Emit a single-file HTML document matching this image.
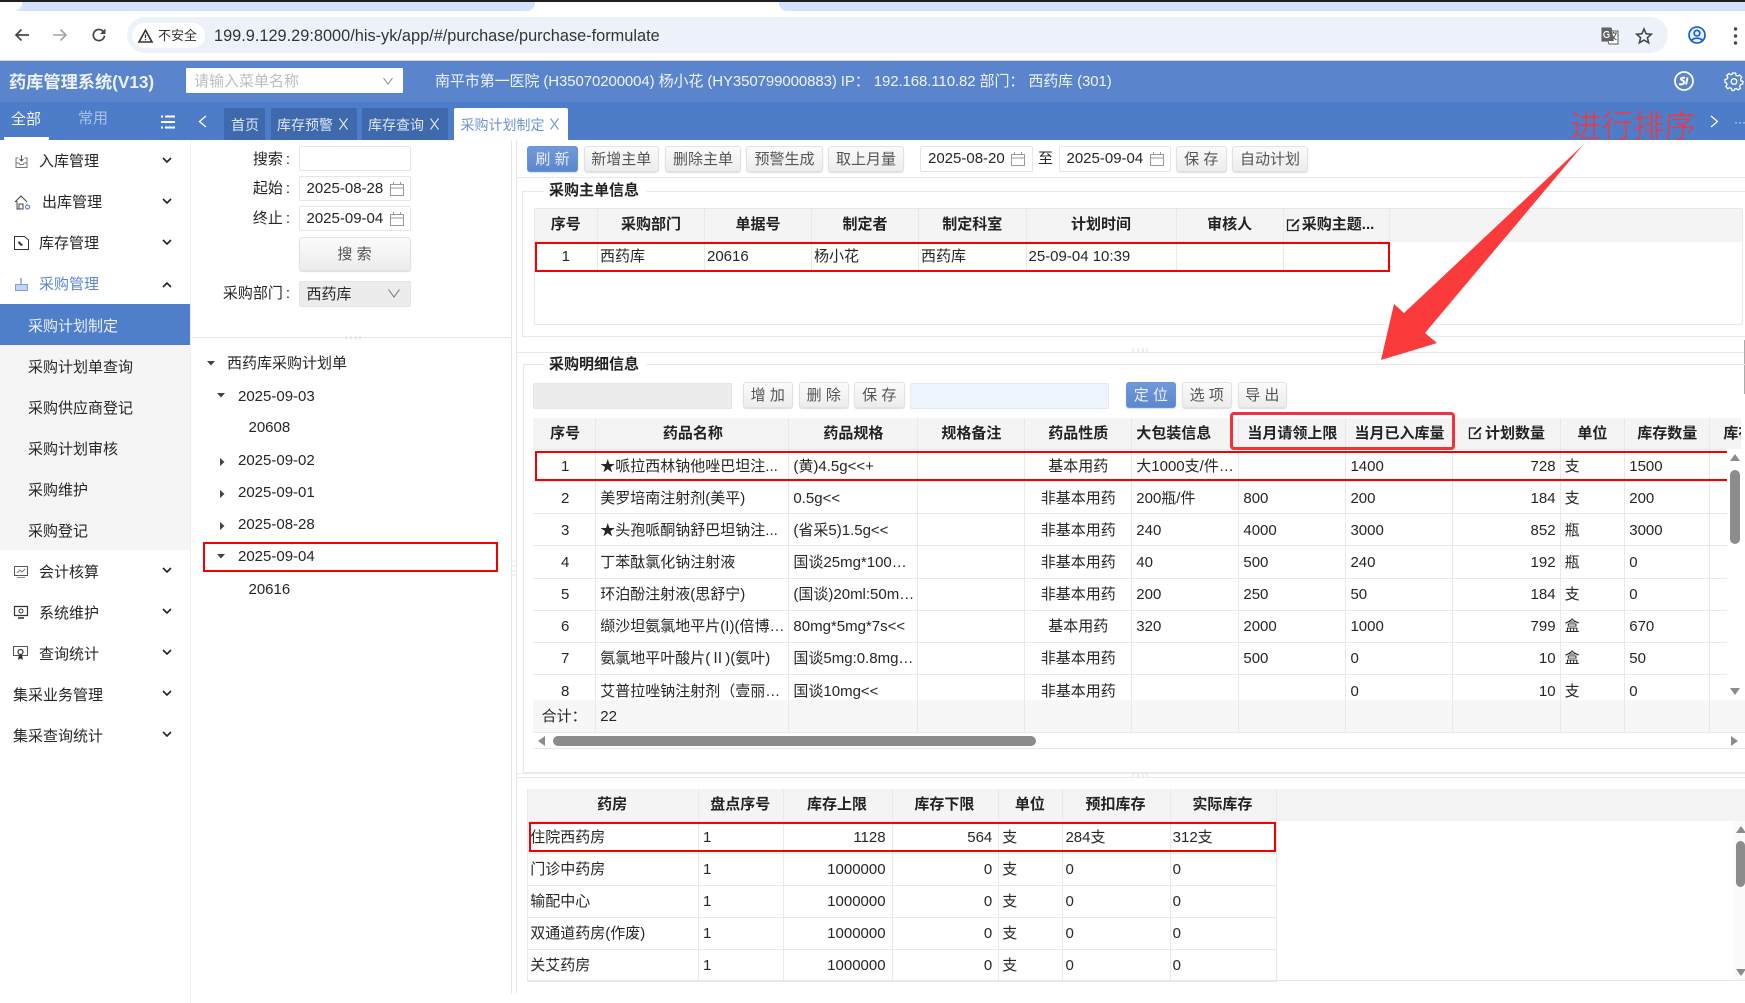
<!DOCTYPE html>
<html lang="zh-CN">
<head>
<meta charset="utf-8">
<title>药库管理系统</title>
<style>
*{box-sizing:border-box}
html,body{margin:0;padding:0;width:1745px;height:1003px;overflow:hidden;background:#fff}
body{position:relative;font:15px/20px "Liberation Sans","Noto Sans CJK SC",sans-serif;color:#262626;filter:blur(.25px)}
.a{position:absolute;white-space:nowrap}
.t{position:absolute;white-space:nowrap;line-height:20px;height:20px}
svg{position:absolute;overflow:visible}
.tab{position:absolute;top:108px;height:32px;background:#3e69ad;color:#dfe7f5;font-size:14px;line-height:34px;border-radius:2px 2px 0 0;white-space:nowrap}
.btn{position:absolute;height:26px;border:1px solid #e2e2e2;border-radius:3px;background:linear-gradient(#fbfbfb,#ececec);box-shadow:0 1px 1px #ddd;color:#555;text-align:center;line-height:26px;white-space:nowrap}
.blue{background:linear-gradient(#7099da,#5c87ce);border-color:#6a93d6;color:#e9eff9}
.inp{position:absolute;height:26px;border:1px solid #e6e6e6;border-radius:2px;background:#fff;line-height:24px;padding-left:7px;white-space:nowrap}
table{border-collapse:collapse;table-layout:fixed;position:absolute;left:0;top:0}
td,th{border:1px solid #e9e9e9;padding:0 4px;overflow:hidden;white-space:nowrap;font-size:15px;font-weight:normal;line-height:20px}
td{padding-top:2px}
th{background:#f4f4f4;font-weight:bold;text-align:center;color:#222;padding:0 2px}
.t1 td{padding:0 2px}
.t3 th{padding:0 3px 0 1px}
.r{text-align:right}.c{text-align:center}
td.p2{padding-left:2px}
td.n{padding-left:6px}
.colon{padding-left:3px}
.red{position:absolute;border:2px solid #f40000}
.sub{background:#f5f5f5}
.line{position:absolute;background:#e9e9e9}
</style>
</head>
<body>
<!-- browser chrome -->
<div class="a" style="left:0;top:2px;width:1745px;height:9px;background:#d3e3fd"></div>
<div class="a" style="left:0;top:2px;width:22px;height:9px;background:#fff;border-radius:0 0 8px 0"></div>
<div class="a" style="left:527px;top:2px;width:260px;height:10px;background:#fff"></div>
<div class="a" style="left:515px;top:2px;width:20px;height:9px;background:#d3e3fd;border-radius:0 0 8px 0"></div>
<div class="a" style="left:779px;top:2px;width:20px;height:9px;background:#d3e3fd;border-radius:0 0 0 8px"></div>
<div class="a" style="left:0;top:0;width:1745px;height:2px;background:#1f1f1f"></div>
<div class="a" style="left:0;top:11px;width:1745px;height:49px;background:#fff"></div>
<div class="a" style="left:127px;top:17px;width:1541px;height:36px;background:#edf2fa;border-radius:18px"></div>
<div class="a" style="left:132px;top:23px;width:73px;height:25px;background:#fff;border-radius:13px"></div>
<svg style="left:14px;top:27px" width="16" height="16" viewBox="0 0 16 16"><path d="M15 8H2M7.5 2.5L2 8l5.5 5.5" fill="none" stroke="#474747" stroke-width="1.7"/></svg>
<svg style="left:52px;top:27px" width="16" height="16" viewBox="0 0 16 16"><path d="M1 8h13M8.500 2.500L14 8l-5.500 5.500" fill="none" stroke="#a3a3a3" stroke-width="1.600"/></svg>
<svg style="left:91px;top:27px" width="16" height="16" viewBox="0 0 16 16"><path d="M13.500 8.500A5.600 5.600 0 1 1 11.800 4L14 6" fill="none" stroke="#474747" stroke-width="1.700"/><path d="M14.500 1.500v5.500H9z" fill="#474747"/></svg>
<svg style="left:138px;top:28.500px" width="15" height="14" viewBox="0 0 15 14"><path d="M7.500 1.200L14 13H1z" fill="none" stroke="#333" stroke-width="1.600"/><path d="M7.500 5.500v3.500M7.500 10v1.300" stroke="#333" stroke-width="1.300"/></svg>
<div class="t" style="left:158px;top:26px;font-size:13px;color:#333">不安全</div>
<div class="t" style="left:214px;top:26px;font-size:16.330px;color:#333;width:447px">199.9.129.29:8000/his-yk/app/#/purchase/purchase-formulate</div>
<svg style="left:1601px;top:27px" width="18" height="18" viewBox="0 0 18 18"><path d="M1 1h9l1 3h6v13H8l-1-3H1z" fill="#fff" stroke="#555" stroke-width="1"/><path d="M1 1h9l3 13H1z" fill="#5f6368"/><path d="M9 6h7M12.500 5v1M15 6c-1 4-3 6-5 8M11 8c1 2 3 4 4.500 5" fill="none" stroke="#555" stroke-width="1"/><path d="M8 5.500A3 3 0 1 0 8 9.500V7.500H6" fill="none" stroke="#fff" stroke-width="1.200"/></svg>
<svg style="left:1635px;top:27px" width="18" height="18" viewBox="0 0 18 18"><path d="M9 2l2.100 4.800 5.200.5-3.900 3.400 1.200 5.100L9 13.100l-4.600 2.700 1.200-5.100-3.900-3.400 5.200-.5z" fill="none" stroke="#474747" stroke-width="1.600"/></svg>
<svg style="left:1688px;top:26px" width="18" height="18" viewBox="0 0 18 18"><circle cx="9" cy="9" r="8" fill="#e8f0fe" stroke="#0b57d0" stroke-width="1.600"/><circle cx="9" cy="7.200" r="2.800" fill="none" stroke="#0b57d0" stroke-width="1.600"/><path d="M3.500 14.500c2-3 9-3 11 0" fill="none" stroke="#0b57d0" stroke-width="1.600"/></svg>
<svg style="left:1733px;top:27px" width="5" height="18" viewBox="0 0 5 18"><circle cx="2.500" cy="2" r="1.700" fill="#474747"/><circle cx="2.500" cy="9" r="1.700" fill="#474747"/><circle cx="2.500" cy="16" r="1.700" fill="#474747"/></svg>

<!-- header -->
<div class="a" style="left:0;top:60px;width:1745px;height:1px;background:#d5d5d5"></div>
<div class="a" style="left:0;top:61px;width:1745px;height:41px;background:#5a85cd"></div>
<div class="a" style="left:0;top:102px;width:1745px;height:38px;background:#4d7dc9"></div>
<div class="t" style="left:9px;top:71.500px;font-size:17.200px;font-weight:bold;color:#eef3fb">药库管理系统(V13)</div>
<div class="a" style="left:186px;top:68px;width:217px;height:25px;background:#fff;border-radius:1px"></div>
<div class="t" style="left:194px;top:72px;color:#bdbdbd">请输入菜单名称</div>
<svg style="left:383px;top:77px" width="10" height="8" viewBox="0 0 10 8"><path d="M.5 1L5 7l4.500-6" fill="none" stroke="#888" stroke-width="1"/></svg>
<div class="t" style="left:435px;top:71.500px;color:#eef3fb;font-size:15px;letter-spacing:-.1px;width:676px">南平市第一医院 (H35070200004) 杨小花 (HY350799000883) IP： 192.168.110.82 部门： 西药库 (301)</div>
<svg style="left:1674px;top:71px" width="20" height="20" viewBox="0 0 20 20"><circle cx="10" cy="10" r="9" fill="none" stroke="#fff" stroke-width="1.800"/><path d="M5 13c3 1 5 0 5-2S6 9 7 7.500c1-1 3-1 4-.5M13.500 6.500l-1.500 7" fill="none" stroke="#fff" stroke-width="2"/></svg>
<svg style="left:1725px;top:72px" width="18" height="18" viewBox="0 0 18 18"><path d="M7.500 1h3l.5 2.200 1.700.8 2-1 2 2.200-1.200 1.900.5 1.700L18 9.500l-.3 2.600-2.200.5-.9 1.600.9 2-2.300 1.700-1.700-1.300-1.800.3L9 18.500H7l-.6-2.100-1.800-.7-1.900 1L.8 14.500l1.200-1.800-.6-1.700L0 10.300V7.500l2-.6.800-1.600-1-2L4 1.600l1.800 1.200L7.300 2.300z" fill="none" stroke="#fff" stroke-width="1.300"/><circle cx="9" cy="9.500" r="2.800" fill="none" stroke="#fff" stroke-width="1.300"/></svg>

<!-- tabs row -->
<div class="t" style="left:11px;top:110px;color:#f3f6fc">全部</div>
<div class="a" style="left:4px;top:137px;width:45px;height:3px;background:#fff"></div>
<div class="t" style="left:78px;top:109px;color:#a9c0e6">常用</div>
<svg style="left:161px;top:115px" width="14" height="14" viewBox="0 0 14 14"><path d="M4 1.500h10M0 7h14M4 12.500h10" stroke="#fff" stroke-width="2"/><path d="M0 1.500h2M0 12.500h2" stroke="#fff" stroke-width="2"/></svg>
<svg style="left:198px;top:115px" width="9" height="13" viewBox="0 0 9 13"><path d="M8 1L1.500 6.500 8 12" fill="none" stroke="#fff" stroke-width="1.300"/></svg>
<div class="tab" style="left:224px;width:41px;padding-left:7px">首页</div>
<div class="tab" style="left:271px;width:86px;padding-left:6px">库存预警</div>
<svg style="left:339px;top:118px" width="9" height="12" viewBox="0 0 9 12"><path d="M.5.500l8 11M8.500.500l-8 11" stroke="#e6ecf7" stroke-width="1.100"/></svg>
<div class="tab" style="left:362px;width:86px;padding-left:6px">库存查询</div>
<svg style="left:430px;top:118px" width="9" height="12" viewBox="0 0 9 12"><path d="M.5.500l8 11M8.500.500l-8 11" stroke="#e6ecf7" stroke-width="1.100"/></svg>
<div class="tab" style="left:453.500px;width:114.500px;padding-left:7px;background:#fff;color:#6b93d3">采购计划制定</div>
<svg style="left:550px;top:118px" width="9" height="12" viewBox="0 0 9 12"><path d="M.5.500l8 11M8.500.500l-8 11" stroke="#6b93d3" stroke-width="1.100"/></svg>
<div class="t" style="left:1570px;top:107px;font-size:31.500px;line-height:38px;height:38px;color:#f8353a;font-weight:300">进行排序</div>
<svg style="left:1710px;top:115px" width="9" height="13" viewBox="0 0 9 13"><path d="M1 1l6.500 5.500L1 12" fill="none" stroke="#fff" stroke-width="1.200"/></svg>
<div class="t" style="left:1734px;top:112px;color:#dfe7f5;font-size:12px">···</div>

<!-- sidebar -->
<div class="a" style="left:190px;top:140px;width:1px;height:863px;background:#f0f0f0"></div>
<div class="t" style="left:39px;top:152px">入库管理</div>
<div class="t" style="left:42px;top:193px">出库管理</div>
<div class="t" style="left:39px;top:234px">库存管理</div>
<div class="t" style="left:39px;top:275px;color:#5b87cf">采购管理</div>
<div class="a" style="left:0;top:304px;width:190px;height:41px;background:#4f7fcb"></div>
<div class="t" style="left:28px;top:317px;color:#eaf0fa">采购计划制定</div>
<div class="a sub" style="left:0;top:345px;width:190px;height:205px"></div>
<div class="t" style="left:28px;top:358px">采购计划单查询</div>
<div class="t" style="left:28px;top:399px">采购供应商登记</div>
<div class="t" style="left:28px;top:440px">采购计划审核</div>
<div class="t" style="left:28px;top:481px">采购维护</div>
<div class="t" style="left:28px;top:521.500px">采购登记</div>
<div class="t" style="left:39px;top:563px">会计核算</div>
<div class="t" style="left:39px;top:604px">系统维护</div>
<div class="t" style="left:39px;top:645px">查询统计</div>
<div class="t" style="left:13px;top:686px">集采业务管理</div>
<div class="t" style="left:13px;top:727px">集采查询统计</div>
<svg style="left:162px;top:157px" width="10" height="7" viewBox="0 0 10 7"><path d="M1 1l4 4 4-4" fill="none" stroke="#222" stroke-width="1.600"/></svg>
<svg style="left:162px;top:198px" width="10" height="7" viewBox="0 0 10 7"><path d="M1 1l4 4 4-4" fill="none" stroke="#222" stroke-width="1.600"/></svg>
<svg style="left:162px;top:239px" width="10" height="7" viewBox="0 0 10 7"><path d="M1 1l4 4 4-4" fill="none" stroke="#222" stroke-width="1.600"/></svg>
<svg style="left:162px;top:281px" width="10" height="7" viewBox="0 0 10 7"><path d="M1 6l4-4 4 4" fill="none" stroke="#222" stroke-width="1.600"/></svg>
<svg style="left:162px;top:567px" width="10" height="7" viewBox="0 0 10 7"><path d="M1 1l4 4 4-4" fill="none" stroke="#222" stroke-width="1.600"/></svg>
<svg style="left:162px;top:608px" width="10" height="7" viewBox="0 0 10 7"><path d="M1 1l4 4 4-4" fill="none" stroke="#222" stroke-width="1.600"/></svg>
<svg style="left:162px;top:649px" width="10" height="7" viewBox="0 0 10 7"><path d="M1 1l4 4 4-4" fill="none" stroke="#222" stroke-width="1.600"/></svg>
<svg style="left:162px;top:690px" width="10" height="7" viewBox="0 0 10 7"><path d="M1 1l4 4 4-4" fill="none" stroke="#222" stroke-width="1.600"/></svg>
<svg style="left:162px;top:731px" width="10" height="7" viewBox="0 0 10 7"><path d="M1 1l4 4 4-4" fill="none" stroke="#222" stroke-width="1.600"/></svg>
<!-- sidebar icons -->
<svg style="left:15px;top:155px" width="13" height="13" viewBox="0 0 13 13"><path d="M3.500 3H1v9.500h11V3H9.500M1 8h3l1 1.500h3L9 8h3" fill="none" stroke="#777" stroke-width="1"/><path d="M6.500 0v6M4.500 4l2 2 2-2" fill="none" stroke="#555" stroke-width="1"/></svg>
<svg style="left:14px;top:195px" width="17" height="15" viewBox="0 0 17 15"><path d="M1 7l6-6 6 6M3 6v8h6V9H5v5" fill="none" stroke="#444" stroke-width="1"/><circle cx="13.500" cy="12" r="2" fill="none" stroke="#5f86c8" stroke-width="1.200"/></svg>
<svg style="left:14px;top:236px" width="15" height="14" viewBox="0 0 15 14"><path d="M.5.500h10l4 3.500v9.500H.5z" fill="none" stroke="#333" stroke-width="1"/><path d="M5 5l4 4-2 1-3-3z" fill="#333"/></svg>
<svg style="left:15px;top:278px" width="13" height="13" viewBox="0 0 13 13"><path d="M6 0v6" stroke="#7fa0d8" stroke-width="1.400"/><path d="M.5 6.500h12v6H.5z" fill="#c4d4ee" stroke="#7fa0d8"/></svg>
<svg style="left:14px;top:566px" width="14" height="12" viewBox="0 0 14 12"><path d="M.5.500h13v9H.5z" fill="none" stroke="#555"/><path d="M3 7l3-3 2 2 3-3" fill="none" stroke="#777"/><path d="M3 11.500h8" stroke="#888"/></svg>
<svg style="left:14px;top:606px" width="14" height="13" viewBox="0 0 14 13"><path d="M.5.500h13v9H.5z" fill="none" stroke="#333" stroke-width="1.200"/><circle cx="7" cy="5" r="2" fill="none" stroke="#333"/><path d="M4 12h6" stroke="#333" stroke-width="1.600"/></svg>
<svg style="left:13px;top:646px" width="15" height="14" viewBox="0 0 15 14"><path d="M.5.500h14v9H.5z" fill="none" stroke="#555"/><circle cx="7.500" cy="6" r="2.500" fill="none" stroke="#333" stroke-width="1.200"/><path d="M6 9l-1 5 2.500-1.500L10 14 9 9" fill="#333"/></svg>

<!-- middle panel -->
<div class="a" style="left:511px;top:140px;width:1px;height:854px;background:#e6e6e6"></div>
<div class="a" style="left:516px;top:140px;width:1px;height:854px;background:#e6e6e6"></div>
<div class="a" style="left:191px;top:337px;width:320px;height:1px;background:#e6e6e6"></div>
<svg style="left:345px;top:336px" width="16" height="4"><path d="M1 0v4M6 0v4M11 0v4M15 0v4" stroke="#ddd"/></svg>
<svg style="left:511px;top:560px" width="5" height="16"><path d="M0 1h5M0 6h5M0 11h5M0 15h5" stroke="#e4e4e4"/></svg>
<div class="t" style="left:240px;top:150px;width:50px;text-align:right">搜索<span class="colon">:</span></div>
<div class="t" style="left:240px;top:179px;width:50px;text-align:right">起始<span class="colon">:</span></div>
<div class="t" style="left:240px;top:209px;width:50px;text-align:right">终止<span class="colon">:</span></div>
<div class="t" style="left:210px;top:284px;width:80px;text-align:right">采购部门<span class="colon">:</span></div>
<div class="inp" style="left:298.500px;top:146px;width:112px;height:25px"></div>
<div class="inp" style="left:298.500px;top:176px;width:112px;height:25px">2025-08-28</div>
<div class="inp" style="left:298.500px;top:206px;width:112px;height:25px">2025-09-04</div>
<svg style="left:390px;top:182px" width="14" height="14" viewBox="0 0 14 14"><path d="M.5 2.500h13v11H.5zM.5 6h13M3.500 0v3M10.500 0v3" fill="none" stroke="#999"/></svg>
<svg style="left:390px;top:212px" width="14" height="14" viewBox="0 0 14 14"><path d="M.5 2.500h13v11H.5zM.5 6h13M3.500 0v3M10.500 0v3" fill="none" stroke="#999"/></svg>
<div class="btn" style="left:298.500px;top:237px;width:112px;height:34px;line-height:34px">搜 索</div>
<div class="inp" style="left:298.500px;top:281px;width:112px;background:#ececec;line-height:26px">西药库</div>
<svg style="left:388px;top:289px" width="12" height="9" viewBox="0 0 12 9"><path d="M.5.500L6 8l5.500-7.500" fill="none" stroke="#777" stroke-width="1"/></svg>
<!-- tree -->
<svg style="left:207px;top:361px" width="8" height="5"><path d="M0 0h8L4 4.500z" fill="#444"/></svg>
<div class="t" style="left:227px;top:354px">西药库采购计划单</div>
<svg style="left:217px;top:393px" width="8" height="5"><path d="M0 0h8L4 4.500z" fill="#444"/></svg>
<div class="t" style="left:238px;top:387px">2025-09-03</div>
<div class="t" style="left:248.500px;top:418px">20608</div>
<svg style="left:220px;top:458px" width="5" height="8"><path d="M0 0v8l4.500-4z" fill="#444"/></svg>
<div class="t" style="left:238px;top:451px">2025-09-02</div>
<svg style="left:220px;top:490px" width="5" height="8"><path d="M0 0v8l4.500-4z" fill="#444"/></svg>
<div class="t" style="left:238px;top:483px">2025-09-01</div>
<svg style="left:220px;top:522px" width="5" height="8"><path d="M0 0v8l4.500-4z" fill="#444"/></svg>
<div class="t" style="left:238px;top:515px">2025-08-28</div>
<svg style="left:217px;top:554px" width="8" height="5"><path d="M0 0h8L4 4.500z" fill="#444"/></svg>
<div class="t" style="left:238px;top:547px">2025-09-04</div>
<div class="t" style="left:248.500px;top:580px">20616</div>
<div class="red" style="left:203px;top:542px;width:295px;height:30px"></div>

<!-- top toolbar -->
<div class="btn blue" style="left:527px;top:146px;width:51px">刷 新</div>
<div class="btn" style="left:583.500px;top:146px;width:75.500px">新增主单</div>
<div class="btn" style="left:665px;top:146px;width:76px">删除主单</div>
<div class="btn" style="left:746px;top:146px;width:77px">预警生成</div>
<div class="btn" style="left:828px;top:146px;width:76px">取上月量</div>
<div class="inp" style="left:920px;top:146px;width:112.500px">2025-08-20</div>
<svg style="left:1011px;top:152px" width="14" height="14" viewBox="0 0 14 14"><path d="M.5 2.500h13v11H.5zM.5 6h13M3.500 0v3M10.500 0v3" fill="none" stroke="#999"/></svg>
<div class="t" style="left:1038px;top:149px">至</div>
<div class="inp" style="left:1058.500px;top:146px;width:112.500px">2025-09-04</div>
<svg style="left:1150px;top:152px" width="14" height="14" viewBox="0 0 14 14"><path d="M.5 2.500h13v11H.5zM.5 6h13M3.500 0v3M10.500 0v3" fill="none" stroke="#999"/></svg>
<div class="btn" style="left:1176px;top:146px;width:50.500px">保 存</div>
<div class="btn" style="left:1232px;top:146px;width:76px">自动计划</div>
<div class="line" style="left:516px;top:177px;width:1229px;height:1px"></div>

<!-- fieldset 1 -->
<div class="a" style="left:522px;top:190.500px;width:1223px;height:146px;border:1px solid #e8e8e8;border-right:0"></div>
<div class="t" style="left:544px;top:181px;background:#fff;padding:0 5px;font-weight:bold;color:#222;width:102px">采购主单信息</div>
<div class="a" style="left:533.500px;top:208px;width:1209.500px;height:117px;border:1px solid #e8e8e8;border-radius:2px;overflow:hidden">
<div class="a" style="left:0;top:0;width:1210px;height:33px;background:#f4f4f4"></div>
<table class="t1" style="width:856px;left:-1px;top:-1px">
<colgroup><col style="width:63.500px"><col style="width:107px"><col style="width:107px"><col style="width:107px"><col style="width:107.500px"><col style="width:150px"><col style="width:107.300px"><col style="width:106.700px"></colgroup>
<tr style="height:33px"><th>序号</th><th>采购部门</th><th>单据号</th><th>制定者</th><th>制定科室</th><th>计划时间</th><th>审核人</th><th style="padding-left:18px;text-align:left">采购主题...</th></tr>
<tr style="height:30px"><td class="c">1</td><td>西药库</td><td>20616</td><td>杨小花</td><td>西药库</td><td>25-09-04 10:39</td><td></td><td></td></tr>
</table>
</div>
<svg style="left:1286px;top:218px" width="15" height="14" viewBox="0 0 15 14"><path d="M8 2H1.500v10.500H12V7" fill="none" stroke="#222" stroke-width="1.300"/><path d="M6 8.500L13 1.500" stroke="#222" stroke-width="2"/></svg>
<div class="red" style="left:534.500px;top:241.500px;width:855px;height:30px"></div>

<!-- arrow -->
<svg style="left:0;top:0;z-index:5" width="1745" height="1003"><polygon points="1583,145 1425,333 1437,343 1381,360 1394,304 1404,313" fill="#fb3b3b"/></svg>

<!-- splitter 1 -->
<div class="line" style="left:516px;top:352px;width:1229px;height:1px"></div>
<svg style="left:1132px;top:348px" width="16" height="4"><path d="M1 0v4M6 0v4M11 0v4M15 0v4" stroke="#ddd"/></svg>
<div class="a" style="left:1744px;top:340px;width:1px;height:54px;background:#aaa"></div>

<!-- fieldset 2 -->
<div class="a" style="left:522.500px;top:364px;width:1223px;height:409px;border:1px solid #e8e8e8;border-right:0"></div>
<div class="t" style="left:544px;top:354.500px;background:#fff;padding:0 5px;font-weight:bold;color:#222;width:102px">采购明细信息</div>
<div class="a" style="left:533px;top:383px;width:199px;height:26px;background:#ececec;border:1px solid #e6e6e6;border-radius:2px"></div>
<div class="btn" style="left:742.500px;top:382px;width:50.500px">增 加</div>
<div class="btn" style="left:799px;top:382px;width:49.500px">删 除</div>
<div class="btn" style="left:854px;top:382px;width:50.500px">保 存</div>
<div class="a" style="left:910px;top:383px;width:198.500px;height:26px;background:#eff5fd;border:1px solid #e6e9ee;border-radius:2px"></div>
<div class="btn blue" style="left:1125.700px;top:382px;width:50.300px">定 位</div>
<div class="btn" style="left:1182px;top:382px;width:49.500px">选 项</div>
<div class="btn" style="left:1237.500px;top:382px;width:49.500px">导 出</div>

<!-- detail table -->
<div class="a" style="left:533px;top:418px;width:1208px;height:282px;overflow:hidden">
<table style="width:1267px;left:-1px;top:-1px">
<colgroup><col style="width:63.300px"><col style="width:193.100px"><col style="width:129px"><col style="width:106.900px"><col style="width:107px"><col style="width:107.100px"><col style="width:107.100px"><col style="width:107px"><col style="width:107.100px"><col style="width:64.700px"><col style="width:85.100px"><col style="width:90px"></colgroup>
<tr style="height:32px"><th style="padding-left:4px">序号</th><th style="padding-left:3px">药品名称</th><th>药品规格</th><th>规格备注</th><th>药品性质</th><th style="text-align:left;padding-left:4px">大包装信息</th><th>当月请领上限</th><th>当月已入库量</th><th style="padding-left:19px">计划数量</th><th>单位</th><th>库存数量</th><th style="text-align:left;padding-left:13px">库存上限</th></tr>
<tr style="height:32.150px"><td class="c n">1</td><td>★哌拉西林钠他唑巴坦注...</td><td>(黄)4.5g&lt;&lt;+</td><td></td><td class="c">基本用药</td><td>大1000支/件…</td><td></td><td>1400</td><td class="r">728</td><td>支</td><td>1500</td><td></td></tr>
<tr style="height:32.150px"><td class="c n">2</td><td>美罗培南注射剂(美平)</td><td>0.5g&lt;&lt;</td><td></td><td class="c">非基本用药</td><td>200瓶/件</td><td>800</td><td>200</td><td class="r">184</td><td>支</td><td>200</td><td></td></tr>
<tr style="height:32.150px"><td class="c n">3</td><td>★头孢哌酮钠舒巴坦钠注...</td><td>(省采5)1.5g&lt;&lt;</td><td></td><td class="c">非基本用药</td><td>240</td><td>4000</td><td>3000</td><td class="r">852</td><td>瓶</td><td>3000</td><td></td></tr>
<tr style="height:32.150px"><td class="c n">4</td><td>丁苯酞氯化钠注射液</td><td>国谈25mg*100…</td><td></td><td class="c">非基本用药</td><td>40</td><td>500</td><td>240</td><td class="r">192</td><td>瓶</td><td>0</td><td></td></tr>
<tr style="height:32.150px"><td class="c n">5</td><td>环泊酚注射液(思舒宁)</td><td>(国谈)20ml:50m…</td><td></td><td class="c">非基本用药</td><td>200</td><td>250</td><td>50</td><td class="r">184</td><td>支</td><td>0</td><td></td></tr>
<tr style="height:32.150px"><td class="c n">6</td><td>缬沙坦氨氯地平片(I)(倍博…</td><td>80mg*5mg*7s&lt;&lt;</td><td></td><td class="c">基本用药</td><td>320</td><td>2000</td><td>1000</td><td class="r">799</td><td>盒</td><td>670</td><td></td></tr>
<tr style="height:32.150px"><td class="c n">7</td><td>氨氯地平叶酸片(Ⅱ)(氨叶)</td><td>国谈5mg:0.8mg…</td><td></td><td class="c">非基本用药</td><td></td><td>500</td><td>0</td><td class="r">10</td><td>盒</td><td>50</td><td></td></tr>
<tr style="height:32.150px"><td class="c n">8</td><td>艾普拉唑钠注射剂（壹丽…</td><td>国谈10mg&lt;&lt;</td><td></td><td class="c">非基本用药</td><td></td><td></td><td>0</td><td class="r">10</td><td>支</td><td>0</td><td></td></tr>
</table>
</div>
<svg style="left:1468px;top:426px" width="15" height="14" viewBox="0 0 15 14"><path d="M8 2H1.500v10.500H12V7" fill="none" stroke="#222" stroke-width="1.300"/><path d="M6 8.500L13 1.500" stroke="#222" stroke-width="2"/></svg>
<div class="red" style="left:535px;top:450.700px;width:1194px;height:30.300px;border-right:0"></div>
<div class="a" style="left:1230px;top:412px;width:225px;height:37.500px;border:3px solid #f5303a;border-radius:4px"></div>
<!-- v scrollbar -->
<div class="a" style="left:1727px;top:449px;width:18px;height:251px;background:#fff"></div>
<svg style="left:1730px;top:454px" width="10" height="7"><path d="M5 0l5 7H0z" fill="#8c8c8c"/></svg>
<div class="a" style="left:1730px;top:470px;width:9.500px;height:74px;background:#8c8c8c;border-radius:5px"></div>
<svg style="left:1730px;top:688px" width="10" height="7"><path d="M0 0h10L5 7z" fill="#8c8c8c"/></svg>
<!-- footer -->
<div class="a" style="left:533px;top:700px;width:1212px;height:33px;overflow:hidden;background:#f7f7f7">
<table style="width:1267px;left:-1px;top:-1px">
<colgroup><col style="width:63.300px"><col style="width:193.100px"><col style="width:129px"><col style="width:106.900px"><col style="width:107px"><col style="width:107.100px"><col style="width:107.100px"><col style="width:107px"><col style="width:107.100px"><col style="width:64.700px"><col style="width:85.100px"><col style="width:90px"></colgroup>
<tr style="height:33px"><td class="c">合计：</td><td>22</td><td></td><td></td><td></td><td></td><td></td><td></td><td></td><td></td><td></td><td></td></tr>
</table>
</div>
<!-- h scrollbar -->
<div class="a" style="left:533px;top:733px;width:1212px;height:15.500px;background:#fff;border-bottom:1px solid #e8e8e8"></div>
<svg style="left:538px;top:736px" width="7" height="10"><path d="M7 0v10L0 5z" fill="#8c8c8c"/></svg>
<div class="a" style="left:552.600px;top:736px;width:483px;height:10px;background:#8c8c8c;border-radius:5px"></div>
<svg style="left:1731px;top:736px" width="7" height="10"><path d="M0 0v10l7-5z" fill="#8c8c8c"/></svg>

<!-- splitter 2 -->
<div class="a" style="left:517px;top:772.500px;width:1228px;height:1.500px;background:#ececec"></div>
<div class="line" style="left:516px;top:777px;width:1229px;height:1px"></div>
<svg style="left:1132px;top:773px" width="16" height="4"><path d="M1 0v4M6 0v4M11 0v4M15 0v4" stroke="#ddd"/></svg>

<!-- bottom table -->
<div class="a" style="left:527.300px;top:789px;width:1217.700px;height:32px;background:#f4f4f4"></div>
<div class="a" style="left:527.300px;top:980px;width:1217.700px;height:1px;background:#e8e8e8"></div>
<div class="a" style="left:527.300px;top:789px;width:750px;height:193px;overflow:hidden">
<table class="t3" style="width:749px;left:0;top:-1px">
<colgroup><col style="width:170.700px"><col style="width:85.500px"><col style="width:108.100px"><col style="width:106.700px"><col style="width:64.200px"><col style="width:107.200px"><col style="width:106.600px"></colgroup>
<tr style="height:32.500px"><th>药房</th><th>盘点序号</th><th>库存上限</th><th>库存下限</th><th>单位</th><th>预扣库存</th><th>实际库存</th></tr>
<tr style="height:32px"><td class="p2">住院西药房</td><td>1</td><td class="r" style="padding-right:6px">1128</td><td class="r" style="padding-right:6px">564</td><td style="padding-left:3px">支</td><td class="p2">284支</td><td class="p2">312支</td></tr>
<tr style="height:32px"><td class="p2">门诊中药房</td><td>1</td><td class="r" style="padding-right:6px">1000000</td><td class="r" style="padding-right:6px">0</td><td style="padding-left:3px">支</td><td class="p2">0</td><td class="p2">0</td></tr>
<tr style="height:32px"><td class="p2">输配中心</td><td>1</td><td class="r" style="padding-right:6px">1000000</td><td class="r" style="padding-right:6px">0</td><td style="padding-left:3px">支</td><td class="p2">0</td><td class="p2">0</td></tr>
<tr style="height:32px"><td class="p2">双通道药房(作废)</td><td>1</td><td class="r" style="padding-right:6px">1000000</td><td class="r" style="padding-right:6px">0</td><td style="padding-left:3px">支</td><td class="p2">0</td><td class="p2">0</td></tr>
<tr style="height:32px"><td class="p2">关艾药房</td><td>1</td><td class="r" style="padding-right:6px">1000000</td><td class="r" style="padding-right:6px">0</td><td style="padding-left:3px">支</td><td class="p2">0</td><td class="p2">0</td></tr>
</table>
</div>
<div class="red" style="left:528.500px;top:821.500px;width:747px;height:30px"></div>
<div class="a" style="left:1733px;top:821px;width:12px;height:159px;background:#fafafa"></div>
<svg style="left:1736px;top:826px" width="10" height="7"><path d="M5 0l5 7H0z" fill="#8c8c8c"/></svg>
<div class="a" style="left:1736px;top:840.700px;width:9px;height:46px;background:#8c8c8c;border-radius:5px"></div>
<svg style="left:1736px;top:969px" width="10" height="7"><path d="M0 0h10L5 7z" fill="#8c8c8c"/></svg>
</body>
</html>
